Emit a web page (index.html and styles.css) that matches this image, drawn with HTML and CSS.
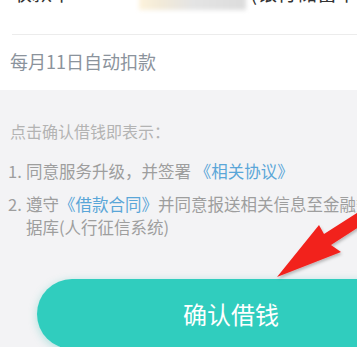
FILE: index.html
```html
<!DOCTYPE html>
<html lang="zh-CN">
<head>
<meta charset="utf-8">
<link rel="stylesheet" href="styles.css">
</head>
<body>
<div class="page">
  <div class="top">
    <div class="top-row">
      <span class="card-label">收款卡</span>
      <span class="mask"></span>
      <span class="card-name">(银行储蓄卡</span>
    </div>
  </div>
  <div class="info">
    <p class="repay">每月11日自动扣款</p>
  </div>
  <div class="terms">
    <p class="lead">点击确认借钱即表示：</p>
    <p class="item"><span class="num">1.</span><span class="body">同意服务升级，并签署 <span class="link">《相关协议》</span></span></p>
    <p class="item item2"><span class="num">2.</span><span class="body"><span class="nowrap">遵守<span class="link">《借款合同》</span>并同意报送相关信息至金融数</span><br>据库(人行征信系统)</span></p>
    <div class="btn">确认借钱</div>
  </div>
  <svg class="arrow" width="357" height="347" viewBox="0 0 357 347">
    <defs>
      <filter id="sh" x="-20%" y="-20%" width="140%" height="140%">
        <feDropShadow dx="1" dy="2" stdDeviation="1.5" flood-color="#000" flood-opacity="0.25"/>
      </filter>
    </defs>
    <polygon points="277,277 319,225 324,234 360,211 362,225 331,245 341,252" fill="#f2231f" filter="url(#sh)"/>
  </svg>
</div>
</body>
</html>
```
FILE: styles.css
```css
html, body {
  margin: 0;
  padding: 0;
}
body {
  width: 357px;
  height: 347px;
  overflow: hidden;
  background: #f3f3f5;
  font-family: "Noto Sans CJK SC", "Noto Sans", sans-serif;
}
.page {
  position: relative;
  width: 357px;
  height: 347px;
  overflow: hidden;
}
.top {
  height: 35px;
  background: #fff;
  overflow: hidden;
  position: relative;
}
.top::after {
  content: "";
  position: absolute;
  left: 12px;
  right: 0;
  bottom: 0;
  height: 1px;
  background: #ececec;
}
.top-row {
  display: flex;
  align-items: flex-start;
  margin-top: -21px;
  height: 28px;
  font-size: 20px;
  line-height: 28px;
  color: #333;
}
.card-label {
  margin-left: 12px;
  width: 133px;
}
.mask {
  width: 113px;
  height: 31px;
  background: linear-gradient(90deg, #fdf3dc 0%, #f2ead8 20%, #e4e4e4 50%, #dcdcdc 100%);
  filter: blur(2px);
}
.card-name {
  margin-left: 4px;
  white-space: nowrap;
}
.info {
  height: 55px;
  background: #fff;
  overflow: hidden;
}
.repay {
  margin: 14px 0 0 10px;
  font-size: 18px;
  line-height: 24px;
  color: #8b939c;
}
.terms {
  padding-top: 29px;
}
.lead {
  margin: 0 0 16px 10px;
  font-size: 16px;
  line-height: 24px;
  color: #b3b3b3;
}
.item {
  display: flex;
  margin: 0 0 10px 8px;
  font-size: 16.5px;
  line-height: 24px;
  color: #9e9e9e;
  white-space: nowrap;
}
.item2 {
  line-height: 23px;
}
.num {
  width: 18px;
  flex: none;
}
.link {
  color: #5aa6d8;
}
.nowrap {
  white-space: nowrap;
}
.btn {
  margin: 40px 0 0 37px;
  width: 388px;
  height: 70px;
  border-radius: 35px 0 0 35px;
  background: #30cdbe;
  box-shadow: 0 2px 8px rgba(40, 190, 175, 0.35);
  color: #fff;
  font-size: 24px;
  line-height: 70px;
  text-align: center;
}
.arrow {
  position: absolute;
  left: 0;
  top: 0;
  pointer-events: none;
}
```
